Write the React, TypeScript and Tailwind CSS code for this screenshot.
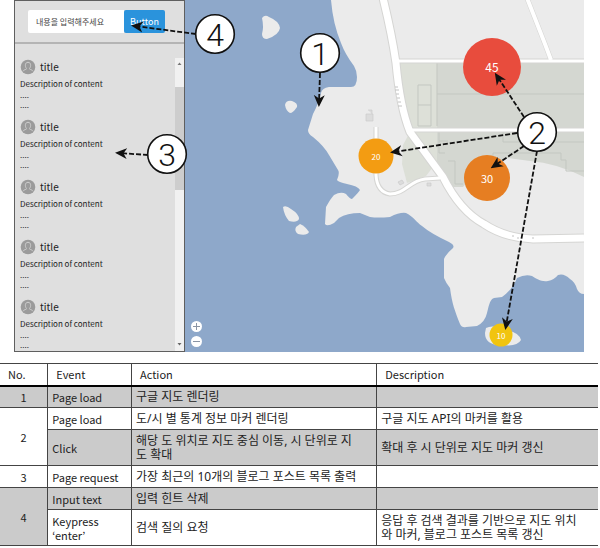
import React from "react";

const uiFont = "font-['Noto_Sans_CJK_KR',sans-serif]";
const koreanFont = "font-['Noto_Sans','Noto_Sans_CJK_KR',sans-serif]";

function Avatar() {
  return (
    <svg viewBox="0 0 16 16" className="size-4 shrink-0" aria-hidden="true">
      <circle cx="8" cy="8" r="7.3" fill="#9b9b9b" />
      <path
        d="M3.2 12.2c.5-1.3 1.8-1.5 3-1.9.5-.3.3-.8 0-1.2C5 7.600 4.700 3.300 8 3.300s3 4.300 1.800 5.800c-.3.4-.5.9 0 1.200 1.200.4 2.500.6 3 1.900"
        fill="none"
        stroke="#cfcfcf"
        strokeWidth="1"
      />
    </svg>
  );
}

function Post() {
  return (
    <li className="h-15 text-[#222]">
      <div className="flex h-4 items-center gap-1">
        <Avatar />
        <h2 className="text-[10px] leading-4">title</h2>
      </div>
      <p className="mt-[3px] text-[8px] leading-3">Description of content</p>
      <p className="text-[8px] leading-[10px]">....</p>
      <p className="text-[8px] leading-[10px]">....</p>
    </li>
  );
}

function Sidebar() {
  return (
    <aside className={`flex w-[171px] shrink-0 flex-col border border-[#5f5f5f] bg-[#dfdfdf] ${uiFont}`}>
      <form className="flex h-[43px] shrink-0 items-center border-b-2 border-[#b4b4b4] pl-[13px]">
        <input
          type="text"
          aria-label="내용을 입력해주세요"
          placeholder="내용을 입력해주세요"
          className="h-[23px] w-24 rounded-l-xs bg-white px-2 text-[8px] text-[#333] placeholder:text-[#444]"
        />
        <button type="button" className="h-[23px] w-[41px] rounded-xs bg-[#2a93dc] text-[9px] text-white">
          Button
        </button>
      </form>
      <div className="mt-[14px] flex min-h-0 flex-1">
        <ul className="flex-1 pt-px pl-[5px]">
          <Post />
          <Post />
          <Post />
          <Post />
          <Post />
        </ul>
        <div className="flex w-[9px] flex-col bg-[#f1f1f1]" aria-hidden="true">
          <svg viewBox="0 0 9 29" className="h-[29px] w-[9px]">
            <path d="M2.500 7 4.500 4.500 6.500 7z" fill="#777" />
          </svg>
          <div className="h-[103px] bg-[#cdcdcd]" />
          <svg viewBox="0 0 9 14" className="mt-auto h-[14px] w-[9px]">
            <path d="M2.500 6 4.500 8.500 6.500 6z" fill="#666" />
          </svg>
        </div>
      </div>
    </aside>
  );
}

function MapCanvas() {
  return (
    <svg viewBox="185 0 399 352" preserveAspectRatio="xMinYMin slice" className="block h-full w-full" aria-hidden="true">
      <rect x="185" width="399" height="352" fill="#8ea8ca" />
      <path
        d="M331 0Q333 24 341 43Q345 54 354 66Q357 71 357 77Q357 87 351 87L329 87Q322 88 321 93Q318 105 313 114L308 130Q308 134 313 137Q324 146 329 155L338 170Q340 173 337 180Q338 182 347 184Q358 186 360 190Q359 192 352 199Q350 199 346 194Q341 191 334 195Q331 198 326 207L325 224Q327 227 334 223L339 218Q347 213 360 213L370 217Q378 218 390 217Q400 212 406 213C414 217 416 222 422 226Q430 233 449 242Q455 245 453 248Q446 254 444 259L444 278Q446 283 450 288C452 304 455 311 460 324Q462 328 466 327L477 326Q485 322 487 313Q490 298 494 298L502 297Q513 289 517 278Q525 274 532 276C537 279 541 282 548 281Q554 280 558 275Q564 273 570 279Q575 282 577 289Q579 294 584 294V0Z"
        fill="#ebebeb"
      />
      <g fill="#ebebeb">
        <path d="M262 18Q265 14 269 17Q279 21 280 28Q279 35 267 39Q262 39 262 34Q264 27 262 18Z" />
        <path d="M285 105Q286 100 292 101Q298 103 297 107Q293 113 290 113Q286 111 285 105Z" />
        <path d="M283 207Q286 205 291 209Q299 214 299 219Q297 223 289 221Q284 215 283 207Z" />
        <path d="M300 224Q305 226 309 232Q307 236 298 234Q294 231 296 227Z" />
        <path d="M486 328Q493 324 505 330Q519 332 521 340Q517 347 503 345Q485 346 485 333Z" />
      </g>

      <path d="M396 62H584V177Q556 163 530 161L508 158 480 167 463 187H448L410 130Q399 107 396 62Z" fill="#d4d7d1" />
      <path d="M396 62H437V167L410 130Q399 107 396 62Z" fill="#dde0d8" />
      <path d="M410 132 436 163 426 176 407 183 402 164 403 145Z" fill="#dcdfd7" />
      <g fill="none" stroke="#c3c7c1" strokeWidth="1">
        <path d="M437 62V126M437 94H584M418 85H431V126H418ZM418 105H431M439 131V153H445M439 141H448M503 131V142H584M493 162V153H561V160H566V171H584M448 161H455V184H463" />
      </g>

      <g fill="none" stroke="#d5d5d3" strokeLinejoin="round">
        <path d="M383 -2Q392 35 396 63Q400 107 410 132L443 177Q460 211 484 224Q505 238 533 239L584 238" strokeWidth="9" />
        <path d="M376 127V175Q377 192 390 194C405 194 409 181 425 179L440 178" strokeWidth="5" />
        <path d="M527 -2 545 44 551 60M396 61H584M410 130H584" strokeWidth="5" />
      </g>
      <g fill="none" stroke="#fff" strokeLinejoin="round">
        <path d="M383 -2Q392 35 396 63Q400 107 410 132L443 177Q460 211 484 224Q505 238 533 239L584 238" strokeWidth="7" />
        <path d="M376 127V175Q377 192 390 194C405 194 409 181 425 179L440 178" strokeWidth="3" />
        <path d="M527 -2 545 44 551 60" strokeWidth="4" />
        <path d="M396 61H584M410 130H584" strokeWidth="3" />
      </g>
      <path d="M366 114h7v7h-7ZM368 110h4v4M398 182l4-2 2 3-4 2ZM427 183h4v3h-4Z" fill="#dcdcdc" stroke="#cbcbcb" strokeWidth=".7" />
      <path d="M395 87h3m-3 3h4m-3 4h3m-2 4h3m-2 4h3m-3 4h4M512 236h2m3 2h2m13 0h2" stroke="#c2c2c2" strokeWidth="1" />
    </svg>
  );
}

function MapView() {
  const marker = "absolute flex -translate-x-1/2 -translate-y-1/2 items-center justify-center rounded-full text-white";
  const zoom = "flex size-[11px] items-center justify-center rounded-full bg-white text-[#8b95a5]";
  return (
    <section aria-label="Map" className={`relative min-w-0 flex-1 overflow-hidden ${uiFont}`}>
      <MapCanvas />
      <button type="button" className={`${marker} top-[67px] left-[307px] size-[58px] bg-[#e84c3d] text-[12px]`}>45</button>
      <button type="button" className={`${marker} top-[156px] left-[191px] size-[35px] bg-[#f39c12] text-[8px]`}>20</button>
      <button type="button" className={`${marker} top-[178px] left-[302px] size-[46px] bg-[#e67e22] text-[11px]`}>30</button>
      <button type="button" className={`${marker} top-[335px] left-[316px] size-[23px] bg-[#f1c40f] text-[8px]`}>10</button>
      <div className="absolute bottom-[5px] left-[6px] flex flex-col gap-[4px]">
        <button type="button" aria-label="Zoom in" className={zoom}>
          <svg viewBox="0 0 7 7" className="size-[7px]"><path d="M0 3.500H7M3.500 0V7" stroke="currentColor" /></svg>
        </button>
        <button type="button" aria-label="Zoom out" className={zoom}>
          <svg viewBox="0 0 7 7" className="size-[7px]"><path d="M0 3.500H7" stroke="currentColor" /></svg>
        </button>
      </div>
    </section>
  );
}

const callouts = [
  { n: 1, x: 320, y: 53 },
  { n: 2, x: 537, y: 132 },
  { n: 3, x: 167, y: 154 },
  { n: 4, x: 215, y: 34 },
];

const arrows = [
  "M320 73 319 103",
  "M524 117 497 76",
  "M517 133 394 152",
  "M524 146 494 166",
  "M537 151 506 326",
  "M148 155 119 153",
  "M196 34 135 26",
];

function Callouts() {
  return (
    <svg viewBox="0 0 600 352" className="pointer-events-none absolute top-0 left-0 h-[352px] w-[600px]">
      <defs>
        <marker id="arrow" viewBox="0 0 12 12" refX="8" refY="6" markerWidth="12" markerHeight="12" markerUnits="userSpaceOnUse" orient="auto">
          <path d="M0 .5 12 6 0 11.500 3.500 6Z" fill="#111" />
        </marker>
      </defs>
      {arrows.map((d) => (
        <path key={d} d={d} stroke="#111" strokeWidth="1.800" strokeDasharray="5 2" markerEnd="url(#arrow)" />
      ))}
      {callouts.map((c) => (
        <g key={c.n}>
          <circle cx={c.x} cy={c.y} r="19.300" fill="#fff" stroke="#111" strokeWidth="1.600" />
          <text x={c.x} y={c.y + 12} textAnchor="middle" className="fill-[#111] font-[Roboto,sans-serif] text-[32px] font-light">
            {c.n}
          </text>
        </g>
      ))}
    </svg>
  );
}

function SpecTable() {
  const line = "border-[#444]";
  const cell = `border ${line} px-1 py-0`;
  const action = `border ${line} py-0 pr-4 pl-1 text-[12px] ${koreanFont}`;
  const first = `border-y ${line} p-0 text-center`;
  const last = `border-y border-l ${line} py-0 pr-4 pl-1 text-[12px] ${koreanFont}`;
  const head = "border-t border-b-2 border-x border-[#444] border-b-black px-2 py-0 text-left font-normal";
  return (
    <table className={`mt-[11px] w-full table-fixed border-collapse text-[11px] leading-[14px] text-[#222] ${uiFont}`}>
      <colgroup>
        <col className="w-[8%]" />
        <col className="w-[14%]" />
        <col className="w-[41%]" />
        <col />
      </colgroup>
      <thead>
        <tr className="h-[22px]">
          <th className={`${head} border-l-0`}>No.</th>
          <th className={head}>Event</th>
          <th className={head}>Action</th>
          <th className={`${head} border-r-0`}>Description</th>
        </tr>
      </thead>
      <tbody>
        <tr className="h-[22px] bg-[#cbcbcb]">
          <td className={first}>1</td>
          <td className={cell}>Page load</td>
          <td className={action}>구글 지도 렌더링</td>
          <td className={last} />
        </tr>
        <tr className="h-[22px]">
          <td className={first} rowSpan={2}>2</td>
          <td className={cell}>Page load</td>
          <td className={action}>도/시 별 통계 정보 마커 렌더링</td>
          <td className={last}>구글 지도 API의 마커를 활용</td>
        </tr>
        <tr className="h-9 bg-[#cbcbcb]">
          <td className={cell}>Click</td>
          <td className={action}>해당 도 위치로 지도 중심 이동, 시 단위로 지도 확대</td>
          <td className={last}>확대 후 시 단위로 지도 마커 갱신</td>
        </tr>
        <tr className="h-[22px]">
          <td className={first}>3</td>
          <td className={cell}>Page request</td>
          <td className={action}>가장 최근의 10개의 블로그 포스트 목록 출력</td>
          <td className={last} />
        </tr>
        <tr className="h-[22px] bg-[#cbcbcb]">
          <td className={first} rowSpan={2}>4</td>
          <td className={cell}>Input text</td>
          <td className={action}>입력 힌트 삭제</td>
          <td className={last} />
        </tr>
        <tr className="h-9">
          <td className={cell}>Keypress<br />‘enter’</td>
          <td className={action}>검색 질의 요청</td>
          <td className={last}>응답 후 검색 결과를 기반으로 지도 위치와 마커, 블로그 포스트 목록 갱신</td>
        </tr>
      </tbody>
    </table>
  );
}

export default function App() {
  return (
    <main className="bg-white pr-[2px]">
      <div className="relative flex h-[352px] pr-[14px] pl-[14px]">
        <Sidebar />
        <MapView />
        <Callouts />
      </div>
      <SpecTable />
    </main>
  );
}
